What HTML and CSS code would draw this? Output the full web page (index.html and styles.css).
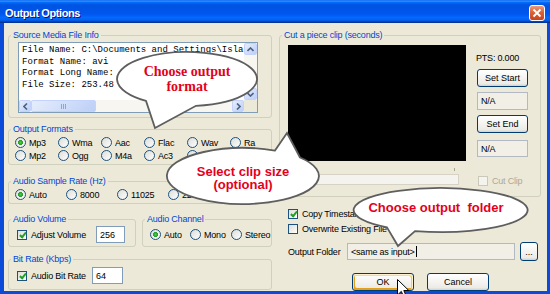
FILE: index.html
```html
<!DOCTYPE html>
<html lang="en">
  <head>
    <meta charset="UTF-8" />
    <title>Output Options</title>
    <link rel="stylesheet" href="styles.css">
  </head>
  <body>
    <div class="window">
      <header class="titlebar">
        <span class="title">Output Options</span>
        <button class="close" aria-label="Close">
          <svg width="14" height="14" viewBox="0 0 14 14"><path d="M3.5,3.5 L10.5,10.5 M10.5,3.5 L3.5,10.5" /></svg>
        </button>
      </header>
      <main class="frame">
        <div class="col left">
          <fieldset class="group info">
            <legend>Source Media File Info</legend>
            <div class="textbox">
<pre>File Name: C:\Documents and Settings\Isla\My Videos\clip.avi
Format Name: avi
Format Long Name: AVI format
File Size: 253.48 MB</pre>
              <div class="vscroll">
                <span class="sb-btn"><svg width="7" height="5" viewBox="0 0 7 5"><path d="M0.5,4 L3.5,1 L6.5,4" /></svg></span>
                <span class="sb-track"></span>
                <span class="sb-btn"><svg width="7" height="5" viewBox="0 0 7 5"><path d="M0.5,1 L3.5,4 L6.5,1" /></svg></span>
              </div>
              <div class="hscroll">
                <span class="sb-btn"><svg width="5" height="7" viewBox="0 0 5 7"><path d="M4,0.5 L1,3.5 L4,6.5" /></svg></span>
                <span class="sb-thumb"><i></i><i></i><i></i></span>
                <span class="sb-track"></span>
                <span class="sb-btn"><svg width="5" height="7" viewBox="0 0 5 7"><path d="M1,0.5 L4,3.5 L1,6.5" /></svg></span>
              </div>
              <span class="sb-corner"></span>
            </div>
          </fieldset>

          <fieldset class="group formats">
            <legend>Output Formats</legend>
            <div class="choices six">
              <label><input type="radio" name="fmt" checked>Mp3</label>
              <label><input type="radio" name="fmt">Wma</label>
              <label><input type="radio" name="fmt">Aac</label>
              <label><input type="radio" name="fmt">Flac</label>
              <label><input type="radio" name="fmt">Wav</label>
              <label><input type="radio" name="fmt">Ra</label>
              <label><input type="radio" name="fmt">Mp2</label>
              <label><input type="radio" name="fmt">Ogg</label>
              <label><input type="radio" name="fmt">M4a</label>
              <label><input type="radio" name="fmt">Ac3</label>
              <label><input type="radio" name="fmt">Au</label>
            </div>
          </fieldset>

          <fieldset class="group rate">
            <legend>Audio Sample Rate (Hz)</legend>
            <div class="choices five">
              <label><input type="radio" name="rate" checked>Auto</label>
              <label><input type="radio" name="rate">8000</label>
              <label><input type="radio" name="rate">11025</label>
              <label><input type="radio" name="rate">22050</label>
              <label><input type="radio" name="rate">44100</label>
            </div>
          </fieldset>

          <div class="pair">
            <fieldset class="group volume">
              <legend>Audio Volume</legend>
              <div class="line">
                <label class="check vol-label"><input type="checkbox" checked>Adjust Volume</label>
                <input class="num vol-num" type="text" value="256">
              </div>
            </fieldset>
            <fieldset class="group channel">
              <legend>Audio Channel</legend>
              <div class="line chans">
                <label><input type="radio" name="ch" checked>Auto</label>
                <label><input type="radio" name="ch">Mono</label>
                <label><input type="radio" name="ch">Stereo</label>
              </div>
            </fieldset>
          </div>

          <fieldset class="group bitrate">
            <legend>Bit Rate (Kbps)</legend>
            <div class="line">
              <label class="check bit-label"><input type="checkbox" checked>Audio Bit Rate</label>
              <input class="num bit-num" type="text" value="64">
            </div>
          </fieldset>
        </div>

        <div class="col right">
          <fieldset class="group clip">
            <legend>Cut a piece clip (seconds)</legend>
            <div class="clip-body">
              <div class="preview">
                <div class="screen"></div>
                <div class="track"></div>
              </div>
              <div class="clip-controls">
                <span class="pts">PTS: 0.000</span>
                <button class="btn">Set Start</button>
                <div class="field">N/A</div>
                <button class="btn">Set End</button>
                <div class="field end">N/A</div>
                <label class="check disabled"><input type="checkbox" disabled>Cut Clip</label>
              </div>
            </div>
          </fieldset>

          <div class="options">
            <label class="check"><input type="checkbox" checked>Copy Timestamp</label>
            <label class="check"><input type="checkbox">Overwrite Existing File</label>
          </div>

          <div class="folder">
            <span class="folder-label">Output Folder</span>
            <div class="field path">&lt;same as input&gt;<span class="caret"></span></div>
            <button class="btn browse">...</button>
          </div>

          <div class="actions">
            <button class="btn hover">OK</button>
            <button class="btn">Cancel</button>
          </div>
        </div>
      </main>

      <!-- tutorial callouts drawn over the dialog -->
      <svg class="callouts" width="550" height="294" viewBox="0 0 550 294">
        <path d="M146,100.9 L155,128 L196,105.8 A70,27 0 1,0 146,100.9 Z" />
        <path d="M275,150.6 L287,133 L300,157.5 A76,28 0 1,1 275,150.6 Z" />
        <path d="M387,227.4 L398,246 L415,231.1 A87,22 0 1,0 387,227.4 Z" />
      </svg>
      <div class="note note-format">Choose output<br>format</div>
      <div class="note note-clip">Select clip size<br>(optional)</div>
      <div class="note note-folder">Choose output  folder</div>

      <svg class="cursor" width="14" height="20" viewBox="0 0 14 20">
        <path d="M0.5,0.5 L0.5,16 L4.3,12.4 L6.8,18 L9.2,17 L6.8,11.5 L11.8,11.5 Z" />
      </svg>
    </div>
  </body>
</html>
```

FILE: styles.css
```css
body {
  margin: 0;
  width: 550px;
  height: 294px;
  overflow: hidden;
  font-family: 'Liberation Sans', sans-serif;
  font-size: 9px;
  letter-spacing: -0.2px;
  color: #000;
}
.window {
  position: relative;
  display: flex;
  flex-direction: column;
  width: 550px;
  height: 294px;
}

/* title bar */
.titlebar {
  flex: none;
  box-sizing: border-box;
  height: 23px;
  padding: 3px 5px 0 5px;
  display: flex;
  align-items: center;
  background: linear-gradient(180deg, #0058ee 0%, #3593ff 4%, #288eff 6%, #127dff 8%, #036ffc 10%, #0262ee 14%, #0057e5 20%, #0054e3 24%, #0055eb 56%, #005bf5 66%, #026afe 76%, #0062ef 86%, #0052d6 92%, #0040ab 94%, #003092 100%);
}
.title {
  flex: 1;
  color: #fff;
  font-weight: bold;
  font-size: 11px;
  letter-spacing: -0.4px;
  text-shadow: 1px 1px #0f1089;
}
.close {
  width: 16px;
  height: 16px;
  padding: 0;
  border: 1px solid #fff;
  border-radius: 3px;
  background: linear-gradient(180deg, #ec9a7c, #dc6236 45%, #c9431d);
  display: flex;
  align-items: center;
  justify-content: center;
}
.close svg {
  stroke: #fff;
  stroke-width: 1.8;
  fill: none;
}

/* dialog body */
.frame {
  flex: 1;
  display: flex;
  gap: 7px;
  padding: 6px 6px 0 4px;
  background: #ece9d8;
  border: solid #0a4cd9;
  border-width: 0 3px 3px 4px;
  overflow: hidden;
}
.col {
  display: flex;
  flex-direction: column;
}
.left {
  width: 264px;
}
.right {
  width: 262px;
}
.group {
  margin: 0;
  padding: 0;
  min-width: 0;
  border: 1px solid #d0d0bf;
  border-radius: 3px;
}
.group legend {
  margin-left: 2px;
  padding: 0 2px;
  line-height: 12px;
  color: #0046d5;
}
.formats {
  margin-top: 5px;
}
.rate {
  margin-top: 10px;
}
.pair {
  display: flex;
  gap: 6px;
  margin-top: 9px;
}
.volume {
  width: 128px;
  box-sizing: border-box;
}
.channel {
  flex: 1;
}
.bitrate {
  margin-top: 6px;
}

/* file info box */
.textbox {
  display: grid;
  grid-template-columns: 1fr 13px;
  grid-template-rows: 1fr 12px;
  box-sizing: border-box;
  width: 240px;
  height: 71px;
  margin: 1px 0 4px 9px;
  border: 1px solid #7f9db9;
  background: #fff;
}
.textbox pre {
  margin: 0;
  padding: 2px 0 0 3px;
  font: 9px/11.5px 'Liberation Mono', monospace;
  letter-spacing: 0;
  overflow: hidden;
}
.vscroll,
.hscroll {
  display: flex;
  background: #f7f6f1;
}
.vscroll {
  flex-direction: column;
}
.sb-track {
  flex: 1;
}
.sb-btn,
.sb-thumb {
  box-sizing: border-box;
  display: flex;
  align-items: center;
  justify-content: center;
  border: 1px solid #c3d3fd;
  border-radius: 2px;
  background: linear-gradient(135deg, #e6eefc, #bccff7);
}
.sb-btn {
  flex: none;
  width: 13px;
  height: 12px;
}
.hscroll .sb-btn {
  width: 12px;
}
.sb-btn svg {
  fill: none;
  stroke: #4d6185;
  stroke-width: 1.6;
}
.sb-thumb {
  width: 65px;
  gap: 1px;
}
.sb-thumb i {
  width: 1px;
  height: 5px;
  background: #8ca4d8;
}
.sb-corner {
  background: #ece9d8;
}

/* radio and check controls */
.choices {
  display: grid;
  padding: 1px 6px 2px;
}
.choices.six {
  grid-template-columns: repeat(6, 43px);
}
.choices.five {
  grid-template-columns: repeat(5, 51px);
}
.choices label,
.chans label,
.check {
  display: flex;
  align-items: center;
  height: 13px;
  white-space: nowrap;
}
input[type='radio'] {
  appearance: none;
  flex: none;
  width: 11px;
  height: 11px;
  margin: 0 3px 0 0;
  border: 1px solid #1c5180;
  border-radius: 50%;
  background: linear-gradient(135deg, #dcdcd7, #fff);
}
input[type='radio']:checked {
  background: radial-gradient(circle, #4ccb48 0, #21a121 2.2px, transparent 2.8px), linear-gradient(135deg, #dcdcd7, #fff);
}
input[type='checkbox'] {
  appearance: none;
  position: relative;
  flex: none;
  width: 10px;
  height: 10px;
  margin: 0 4px 0 0;
  border: 1px solid #1c5180;
  background: linear-gradient(135deg, #dcdcd7, #fff);
}
input[type='checkbox']:checked::after {
  content: '';
  position: absolute;
  left: 2.5px;
  top: 0;
  width: 2px;
  height: 5px;
  border: solid #21a121;
  border-width: 0 2px 2px 0;
  transform: rotate(40deg);
}
.check.disabled {
  color: #aca899;
}
.check.disabled input {
  border-color: #cac8bb;
  background: #f4f3ee;
}

/* inline rows with number inputs */
.line {
  display: flex;
  align-items: center;
  height: 17px;
  padding: 1px 0 3px 8px;
}
.bitrate .line {
  padding: 2px 0 5px 8px;
}
.vol-label {
  width: 79px;
}
.bit-label {
  width: 75px;
}
.num {
  box-sizing: border-box;
  height: 17px;
  padding: 0 3px;
  border: 1px solid #7f9db9;
  font: inherit;
}
.vol-num {
  width: 29px;
}
.bit-num {
  width: 31px;
}
.chans {
  display: grid;
  grid-template-columns: 40px 41px auto;
  padding-left: 7px;
}

/* clip cutter */
.clip-body {
  display: flex;
  padding: 4px 0 9px 8px;
}
.screen {
  width: 178px;
  height: 116px;
  background: #000;
}
.track {
  position: relative;
  box-sizing: border-box;
  width: 171px;
  height: 11px;
  margin-top: 13px;
  border: 1px solid #d6d3c6;
  background: #f4f3ee;
}
.track::after {
  content: '';
  position: absolute;
  right: 3px;
  top: -7px;
  width: 1px;
  height: 3px;
  background: #a7a592;
}
.clip-controls {
  display: flex;
  flex-direction: column;
  width: 51px;
  margin-left: 11px;
  gap: 5px;
}
.pts {
  margin: 7px 0 0 -1px;
  line-height: 12px;
}
.btn {
  box-sizing: border-box;
  height: 18px;
  padding: 0;
  font: inherit;
  color: #000;
  border: 1px solid #003c74;
  border-radius: 3px;
  background: linear-gradient(180deg, #fff, #ecebe6 86%, #d6d0c5);
}
.btn.hover {
  box-shadow: inset -1px 1px #fff0cf, inset 1px 2px #fdd889, inset -2px 2px #fbc761, inset 2px -2px #e5a01a;
}
.field {
  box-sizing: border-box;
  height: 18px;
  padding: 0 3px;
  display: flex;
  align-items: center;
  border: 1px solid #b2b9c4;
  background: #f1efe6;
  white-space: nowrap;
}
.field.end {
  height: 17px;
  margin-top: 2px;
}
.clip-controls .check {
  margin-top: 12px;
  margin-left: 1px;
}

/* lower right */
.options {
  display: flex;
  flex-direction: column;
  margin-top: 9px;
  padding-left: 9px;
}
.options .check {
  height: 15px;
}
.folder {
  display: flex;
  align-items: center;
  margin-top: 6px;
  padding-left: 9px;
}
.folder-label {
  width: 59px;
  white-space: nowrap;
}
.path {
  width: 168px;
  height: 17px;
}
.caret {
  width: 1px;
  height: 11px;
  margin-left: 1px;
  background: #000;
}
.browse {
  width: 18px;
  height: 19px;
  margin-left: 5px;
}
.actions {
  display: flex;
  gap: 13px;
  margin: 12px 0 0 73px;
}
.actions .btn {
  width: 62px;
}

/* callouts */
.callouts {
  position: absolute;
  left: 0;
  top: 0;
  pointer-events: none;
}
.callouts path {
  fill: #fff;
  stroke: #5e5e5e;
  stroke-width: 1.8;
}
.note {
  position: absolute;
  text-align: center;
  color: #e5001a;
  font-weight: bold;
  letter-spacing: 0;
  white-space: pre;
}
.note-format {
  left: 117px;
  top: 64px;
  width: 140px;
  font: bold 14px/15px 'Liberation Serif', serif;
}
.note-clip {
  left: 168px;
  top: 165px;
  width: 150px;
  font-family: 'Liberation Sans', sans-serif;
  font-size: 13px;
  line-height: 13px;
}
.note-folder {
  left: 356px;
  top: 201px;
  width: 160px;
  font-family: 'Liberation Sans', sans-serif;
  font-size: 13px;
  line-height: 14px;
}
.cursor {
  position: absolute;
  left: 397px;
  top: 279px;
}
.cursor path {
  fill: #fff;
  stroke: #000;
  stroke-width: 1;
}
```
